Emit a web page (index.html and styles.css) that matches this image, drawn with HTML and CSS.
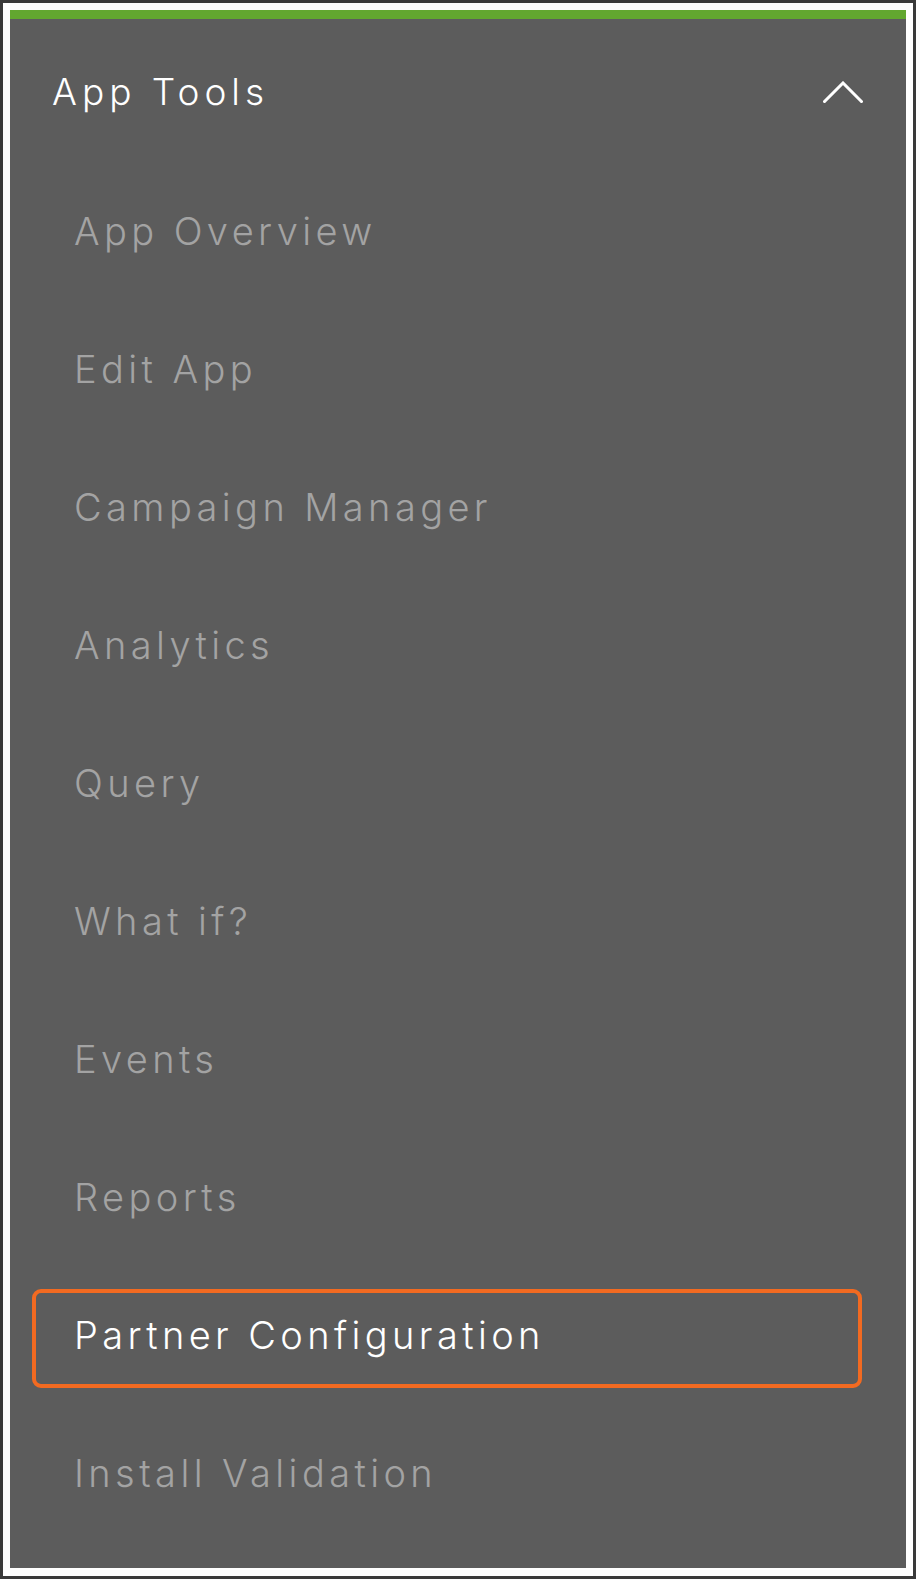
FILE: index.html
```html
<!DOCTYPE html>
<html lang="en">
<head>
<meta charset="utf-8">
<title>App Tools</title>
<link rel="stylesheet" href="styles.css">
</head>
<body>
<div class="frame">
  <nav class="panel">
    <div class="panel-header">
      <span class="panel-title">App Tools</span>
      <svg class="chevron" width="40" height="22" viewBox="0 0 40 22" aria-hidden="true">
        <polyline points="1.5,20.5 20,2 38.5,20.5" fill="none" stroke="#ffffff" stroke-width="3" stroke-linecap="square"/>
      </svg>
    </div>
    <ul class="menu">
      <li class="menu-item"><a class="menu-link">App Overview</a></li>
      <li class="menu-item"><a class="menu-link">Edit App</a></li>
      <li class="menu-item"><a class="menu-link">Campaign Manager</a></li>
      <li class="menu-item"><a class="menu-link">Analytics</a></li>
      <li class="menu-item"><a class="menu-link">Query</a></li>
      <li class="menu-item"><a class="menu-link">What if?</a></li>
      <li class="menu-item"><a class="menu-link">Events</a></li>
      <li class="menu-item"><a class="menu-link">Reports</a></li>
      <li class="menu-item"><a class="menu-link is-focused">Partner Configuration</a></li>
      <li class="menu-item"><a class="menu-link">Install Validation</a></li>
    </ul>
  </nav>
</div>
</body>
</html>
```

FILE: styles.css
```css
* { box-sizing: border-box; }

html, body {
  margin: 0;
  padding: 0;
  background: #3a3a3a;
}

.frame {
  width: 916px;
  height: 1579px;
  border: 3px solid #3a3a3a;
  background: #ffffff;
  padding: 7px;
}

.panel {
  width: 896px;
  height: 1558px;
  background: #5c5c5c;
  border-top: 9px solid #62a72f;
  font-family: "Inter", "Open Sans", "Liberation Sans", sans-serif;
  font-weight: 300;
  padding-bottom: 23px;
}

.panel-header {
  height: 146px;
  display: flex;
  align-items: center;
  justify-content: space-between;
  padding: 0 43px 0 42px;
}

.panel-title {
  color: #ffffff;
  font-size: 37px;
  letter-spacing: 5px;
  line-height: 1;
  padding-bottom: 2px;
}

.chevron {
  display: block;
  margin-top: -1px;
}

.menu {
  list-style: none;
  margin: 0;
  padding: 0;
}

.menu-item {
  height: 138px;
  display: flex;
  align-items: center;
}

.menu-link {
  display: flex;
  align-items: center;
  width: 830px;
  height: 99px;
  margin-left: 22px;
  padding-left: 38px;
  padding-bottom: 7px;
  border: 4px solid transparent;
  border-radius: 9px;
  color: #a3a3a3;
  font-size: 38px;
  letter-spacing: 4.4px;
  line-height: 1;
}

.menu-link.is-focused {
  border-color: #f26a21;
  color: #ffffff;
}
```
